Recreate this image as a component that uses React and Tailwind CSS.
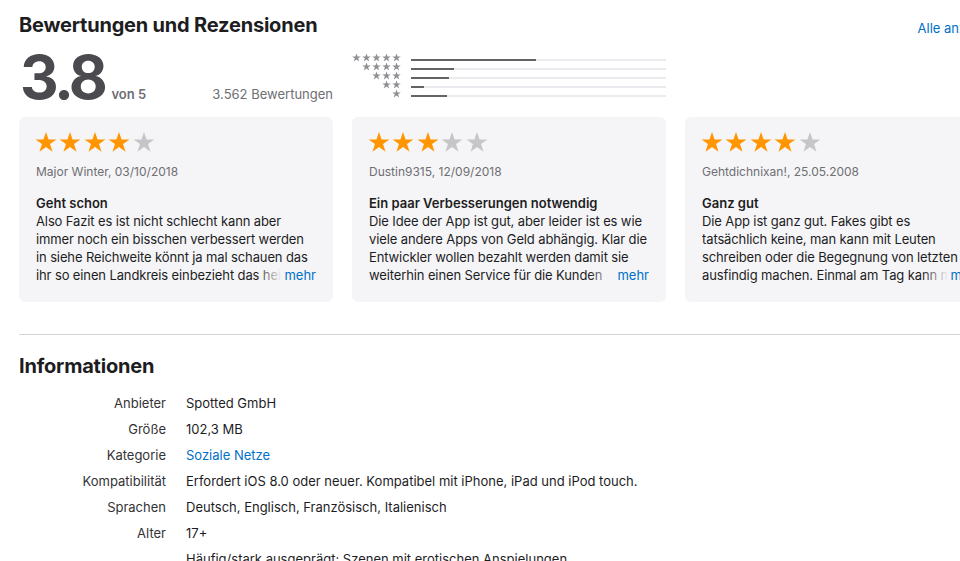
import React from "react";

const STAR = "M12 0.6l2.8 8.1h8.6l-7 5.1 2.7 8.2L12 16.9 4.9 22l2.7-8.2-7-5.1h8.6z";

function Star({ filled }) {
    return (
        <svg width="22" height="22" viewBox="0 0 24 23">
            <path d={STAR} fill={filled ? "#ff9500" : "#c6c6c8"} />
        </svg>
    );
}

function MiniStars({ count }) {
    return (
        <div className="flex justify-end gap-[1px] w-[49px]">
            {Array.from({ length: count }).map((_, i) => (
                <svg key={i} width="9" height="9" viewBox="0 0 24 23">
                    <path d={STAR} fill="#8e8e93" />
                </svg>
            ))}
        </div>
    );
}

const bars = [
    { stars: 5, pct: 49 },
    { stars: 4, pct: 16.8 },
    { stars: 3, pct: 14.8 },
    { stars: 2, pct: 5 },
    { stars: 1, pct: 14 },
];

const reviews = [
    {
        rating: 4,
        author: "Major Winter, 03/10/2018",
        title: "Geht schon",
        body: "Also Fazit es ist nicht schlecht kann aber immer noch ein bisschen verbessert werden in siehe Reichweite könnt ja mal schauen das ihr so einen Landkreis einbezieht das heißt man sieht dann auch mehr Leute aus der Umgebung.",
    },
    {
        rating: 3,
        author: "Dustin9315, 12/09/2018",
        title: "Ein paar Verbesserungen notwendig",
        body: "Die Idee der App ist gut, aber leider ist es wie viele andere Apps von Geld abhängig. Klar die Entwickler wollen bezahlt werden damit sie weiterhin einen Service für die Kunden anbieten können, aber so ist es einfach zu viel.",
    },
    {
        rating: 4,
        author: "Gehtdichnixan!, 25.05.2008",
        title: "Ganz gut",
        body: "Die App ist ganz gut. Fakes gibt es\ntatsächlich keine, man kann mit Leuten\nschreiben oder die Begegnung von letzten\nausfindig machen. Einmal am Tag kann man sich auch eine Begegnung zurückholen.",
    },
];

const infos = [
    ["Anbieter", "Spotted GmbH"],
    ["Größe", "102,3 MB"],
    ["Kategorie", "Soziale Netze", true],
    ["Kompatibilität", "Erfordert iOS 8.0 oder neuer. Kompatibel mit iPhone, iPad und iPod touch."],
    ["Sprachen", "Deutsch, Englisch, Französisch, Italienisch"],
    ["Alter", "17+"],
    ["", "Häufig/stark ausgeprägt: Szenen mit erotischen Anspielungen"],
];

function ReviewCard({ review }) {
    return (
        <div className="w-[314px] shrink-0 bg-[#f5f5f7] rounded-[6px] px-[17px] pt-[14px] pb-[18px]">
            <div className="flex gap-[2.4px] h-[22px] -ml-[1px]">
                {[0, 1, 2, 3, 4].map((i) => (
                    <Star key={i} filled={i < review.rating} />
                ))}
            </div>
            <p className="mt-[11px] text-[12px] leading-[16px] text-[#6e6e73]">{review.author}</p>
            <h3 className="mt-[14px] text-[13px] leading-[18px] font-semibold text-[#1d1d1f]">{review.title}</h3>
            <div className="relative h-[72px] overflow-hidden">
                <p className="whitespace-pre-line text-[13px] leading-[18px] tracking-[-0.12px] text-[#1d1d1f]">{review.body}</p>
                <div className="absolute right-0 bottom-0 h-[18px] flex items-center">
                    <div className="w-[26px] h-full bg-gradient-to-r from-[#f5f5f7]/0 to-[#f5f5f7]" />
                    <span className="h-full bg-[#f5f5f7] pl-[2px] text-[13px] leading-[18px] text-[#0070c9]">mehr</span>
                </div>
            </div>
        </div>
    );
}

export default function App() {
    return (
        <div className="w-[960px] h-[561px] overflow-hidden bg-white font-['Inter','Noto_Sans',sans-serif] text-[#1d1d1f] antialiased">
            <div className="w-[1000px] pl-[19px]">

                <div className="flex justify-between pt-[13px] h-[37px]">
                    <h2 className="text-[20px] leading-[24px] font-bold tracking-[-0.2px]">Bewertungen und Rezensionen</h2>
                    <a href="#" className="self-end text-[13px] leading-[18px] text-[#0070c9]">Alle anzeigen</a>
                </div>

                <div className="flex items-start mt-[10px]">
                    <div className="w-[314px] flex items-baseline">
                        <span className="text-[60px] leading-[60px] font-bold tracking-[-3.5px] text-[#4a4a4f] ml-[1px]">3.8</span>
                        <span className="ml-[7px] text-[13px] font-semibold text-[#6e6e73]">von 5</span>
                        <span className="ml-auto text-[13px] text-[#6e6e73]">3.562 Bewertungen</span>
                    </div>
                    <div className="ml-[19px] w-[314px] mt-[6px]">
                        {bars.map((b) => (
                            <div key={b.stars} className="flex h-[9px]">
                                <div className="flex items-center">
                                    <MiniStars count={b.stars} />
                                </div>
                                <div className="ml-[10px] flex-1 flex items-end pb-[1px]">
                                    <div className="w-full h-[2px] bg-[#ebebef]">
                                        <div className="h-full bg-[#636366]" style={{ width: `${b.pct}%` }} />
                                    </div>
                                </div>
                            </div>
                        ))}
                    </div>
                </div>

                <div className="flex gap-[19px] mt-[10px]">
                    {reviews.map((r, i) => (
                        <ReviewCard key={i} review={r} />
                    ))}
                </div>

                <div className="mt-[32px] border-t border-[#d2d2d7]" />

                <h2 className="mt-[19px] text-[20px] leading-[24px] font-bold tracking-[-0.2px]">Informationen</h2>

                <dl className="mt-[12px]">
                    {infos.map(([label, value, link], i) => (
                        <div key={i} className="flex text-[13px] leading-[26px]">
                            <dt className="w-[147px] text-right text-[#333336]">{label}</dt>
                            <dd className={"ml-[20px] " + (link ? "text-[#0070c9]" : "text-[#1d1d1f]")}>{value}</dd>
                        </div>
                    ))}
                </dl>
            </div>
        </div>
    );
}
